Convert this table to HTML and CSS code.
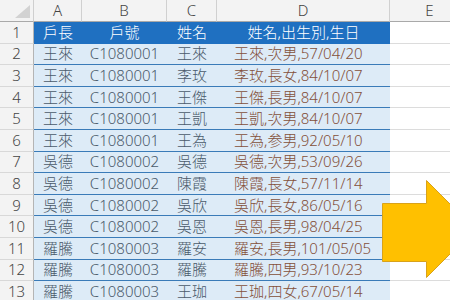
FILE: index.html
```html
<!DOCTYPE html>
<html lang="zh-Hant">
<head>
<meta charset="utf-8">
<title>戶長資料</title>
<link rel="stylesheet" href="styles.css">
</head>
<body>
<div class="sheet">
  <div class="corner"><span class="tri"></span></div>
  <div class="colh">A</div><div class="colh">B</div><div class="colh">C</div><div class="colh">D</div><div class="colh">E</div>

  <div class="rowh">1</div><div class="th">戶長</div><div class="th">戶號</div><div class="th">姓名</div><div class="th">姓名,出生別,生日</div><div class="e"></div>
  <div class="rowh">2</div><div class="td">王來</div><div class="td">C1080001</div><div class="td">王來</div><div class="td d">王來,次男,57/04/20</div><div class="e"></div>
  <div class="rowh">3</div><div class="td">王來</div><div class="td">C1080001</div><div class="td">李玫</div><div class="td d">李玫,長女,84/10/07</div><div class="e"></div>
  <div class="rowh">4</div><div class="td">王來</div><div class="td">C1080001</div><div class="td">王傑</div><div class="td d">王傑,長男,84/10/07</div><div class="e"></div>
  <div class="rowh">5</div><div class="td">王來</div><div class="td">C1080001</div><div class="td">王凱</div><div class="td d">王凱,次男,84/10/07</div><div class="e"></div>
  <div class="rowh">6</div><div class="td">王來</div><div class="td">C1080001</div><div class="td">王為</div><div class="td d">王為,参男,92/05/10</div><div class="e"></div>
  <div class="rowh">7</div><div class="td">吳德</div><div class="td">C1080002</div><div class="td">吳德</div><div class="td d">吳德,次男,53/09/26</div><div class="e"></div>
  <div class="rowh">8</div><div class="td">吳德</div><div class="td">C1080002</div><div class="td">陳霞</div><div class="td d">陳霞,長女,57/11/14</div><div class="e"></div>
  <div class="rowh">9</div><div class="td">吳德</div><div class="td">C1080002</div><div class="td">吳欣</div><div class="td d">吳欣,長女,86/05/16</div><div class="e"></div>
  <div class="rowh">10</div><div class="td">吳德</div><div class="td">C1080002</div><div class="td">吳恩</div><div class="td d">吳恩,長男,98/04/25</div><div class="e"></div>
  <div class="rowh">11</div><div class="td">羅騰</div><div class="td">C1080003</div><div class="td">羅安</div><div class="td d">羅安,長男,101/05/05</div><div class="e"></div>
  <div class="rowh">12</div><div class="td">羅騰</div><div class="td">C1080003</div><div class="td">羅騰</div><div class="td d">羅騰,四男,93/10/23</div><div class="e"></div>
  <div class="rowh">13</div><div class="td">羅騰</div><div class="td">C1080003</div><div class="td">王珈</div><div class="td d">王珈,四女,67/05/14</div><div class="e"></div>
</div>
<svg class="arrow" width="90" height="104" viewBox="380 178 90 104" xmlns="http://www.w3.org/2000/svg">
  <polygon points="382.5,203.5 426.5,203.5 426.5,180.5 475,229 426.5,277.5 426.5,261.5 382.5,261.5" fill="#ffc000" stroke="#d9a21a" stroke-width="1"/>
</svg>
</body>
</html>
```

FILE: styles.css
```css
html, body {
  margin: 0;
  padding: 0;
  overflow: hidden;
  background: #ffffff;
}

body {
  position: relative;
  width: 450px;
  height: 300px;
  font-family: "Noto Sans", "Noto Sans CJK TC", sans-serif;
  font-size: 15px;
  font-weight: 300;
}

.sheet {
  display: grid;
  grid-template-columns: 34px 48px 85px 50px 173px 80px;
  grid-template-rows: 22px repeat(13, 21.6px);
  width: 470px;
}

.sheet > div {
  box-sizing: border-box;
  display: flex;
  align-items: center;
  justify-content: center;
  white-space: nowrap;
  line-height: 1;
}

.corner {
  position: relative;
  background: #f3f3f3;
  border-right: 1px solid #cfcfcf;
  border-bottom: 1px solid #a9a9a9;
}

.tri {
  position: absolute;
  right: 3px;
  bottom: 3px;
  width: 0;
  height: 0;
  border-left: 15px solid transparent;
  border-bottom: 13px solid #d2d2d2;
}

.colh {
  background: #f3f3f3;
  color: #444444;
  font-size: 15px;
  border-right: 1px solid #d0d0d0;
  border-bottom: 1px solid #a9a9a9;
}

.rowh {
  background: #f3f3f3;
  color: #444444;
  font-size: 15px;
  border-right: 1px solid #b4b4b4;
  border-bottom: 1px solid #d8d8d8;
}

.th {
  background: #1f70c1;
  color: #ffffff;
}

.td {
  background: #ddebf7;
  color: #4a5a6a;
  border-bottom: 1px solid #3a7bb8;
}

.sheet > .d {
  justify-content: flex-start;
  padding-left: 17px;
  color: #84503a;
}

.e {
  background: #ffffff;
  border-bottom: 1px solid #dcdcdc;
}

.arrow {
  position: absolute;
  left: 380px;
  top: 178px;
}
```
